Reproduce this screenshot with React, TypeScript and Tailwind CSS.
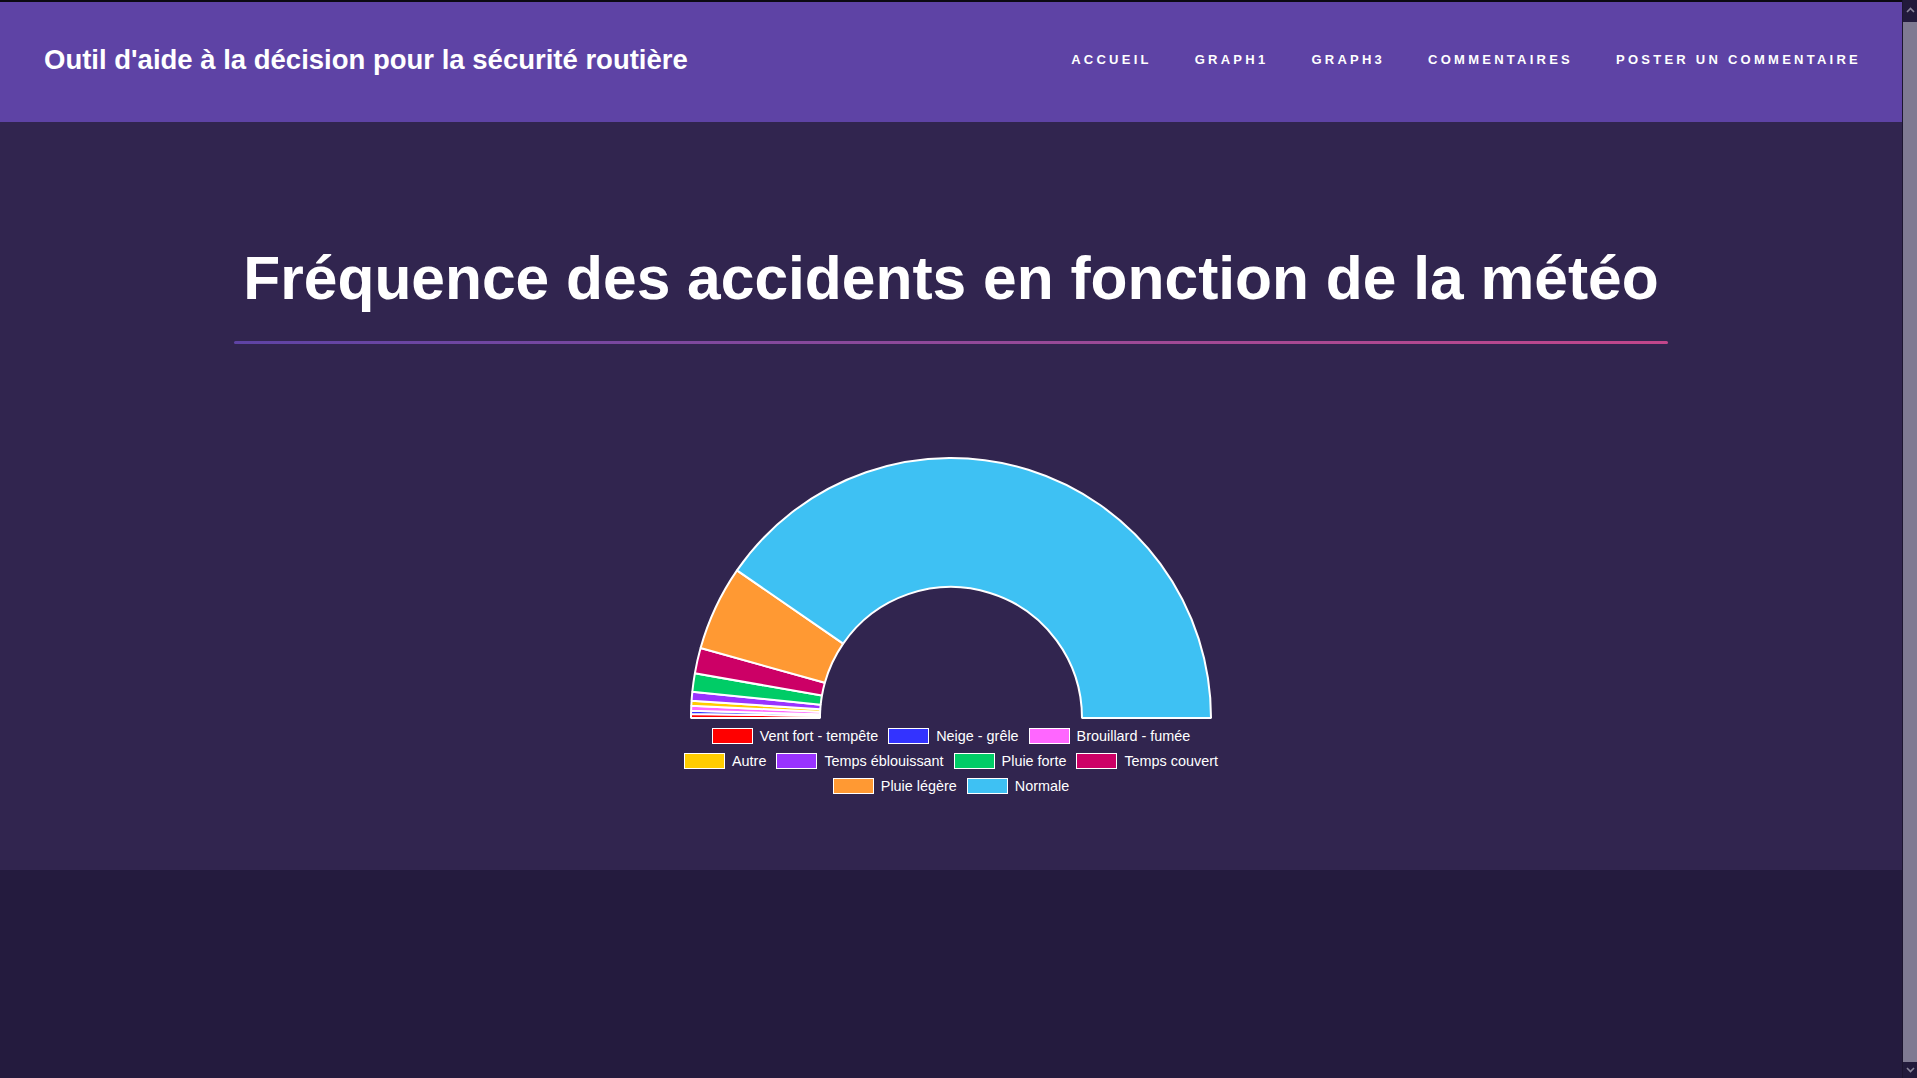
import React from 'react'

interface Slice {
  label: string
  color: string
  deg: number
}

const slices: Slice[] = [
  { label: 'Vent fort - tempête', color: '#ff0000', deg: 0.9 },
  { label: 'Neige - grêle', color: '#3333ff', deg: 0.7 },
  { label: 'Brouillard - fumée', color: '#ff66ff', deg: 1.1 },
  { label: 'Autre', color: '#ffcc00', deg: 1.1 },
  { label: 'Temps éblouissant', color: '#9933ff', deg: 2.0 },
  { label: 'Pluie forte', color: '#00cc66', deg: 4.1 },
  { label: 'Temps couvert', color: '#cc0066', deg: 5.7 },
  { label: 'Pluie légère', color: '#ff9933', deg: 19.0 },
  { label: 'Normale', color: '#3ec1f3', deg: 145.4 },
]

const legendRows = [slices.slice(0, 3), slices.slice(3, 7), slices.slice(7)]

const navLinks = ['Accueil', 'Graph1', 'Graph3', 'Commentaires', 'Poster un commentaire']

const CX = 270
const CY = 266
const R_OUT = 260
const R_IN = 131

// angle measured from the left end, going clockwise over the top
const point = (r: number, deg: number) => {
  const a = (deg * Math.PI) / 180
  return [CX - r * Math.cos(a), CY - r * Math.sin(a)]
}

const arcPath = (from: number, to: number) => {
  const large = to - from > 180 ? 1 : 0
  const [x1, y1] = point(R_OUT, from)
  const [x2, y2] = point(R_OUT, to)
  const [x3, y3] = point(R_IN, to)
  const [x4, y4] = point(R_IN, from)
  return `M ${x1} ${y1} A ${R_OUT} ${R_OUT} 0 ${large} 1 ${x2} ${y2} L ${x3} ${y3} A ${R_IN} ${R_IN} 0 ${large} 0 ${x4} ${y4} Z`
}

const HalfDoughnut: React.FC = () => {
  let start = 0
  return (
    <svg width={540} height={270} viewBox="0 0 540 270" className="block">
      {slices.map((s) => {
        const d = arcPath(start, start + s.deg)
        start += s.deg
        return (
          <path key={s.label} d={d} fill={s.color} stroke="#ffffff" strokeWidth={2} strokeLinejoin="bevel" />
        )
      })}
    </svg>
  )
}

const Chevron: React.FC<{ up?: boolean }> = ({ up }) => (
  <svg width={9} height={6} viewBox="0 0 9 6" className="block">
    <polyline
      points={up ? '1,5 4.5,1.5 8,5' : '1,1 4.5,4.5 8,1'}
      fill="none"
      stroke="#8b869c"
      strokeWidth={1.6}
    />
  </svg>
)

const ScrollStrip: React.FC = () => (
  <div className="flex w-[15px] shrink-0 flex-col border-l border-[#1c1530] bg-[#231b3e]">
    <div className="flex h-[20px] items-center justify-center bg-[#221a3b]">
      <Chevron up />
    </div>
    <div className="mt-[2px] flex-1 bg-[#7f7a92]" />
    <div className="flex h-[16px] items-center justify-center bg-[#221a3b]">
      <Chevron />
    </div>
  </div>
)

const App: React.FC = () => {
  return (
    <div className="flex h-screen overflow-hidden bg-[#241b3e] font-['Liberation_Sans',Arial,sans-serif] text-white">
      <div className="min-w-0 flex-1">
        <header className="flex h-[122px] items-center justify-between border-t-2 border-[#0c0a12] bg-[#5e43a5] pl-[44px] pr-[41px]">
          <h2 className="pb-[4px] text-[27.5px] font-bold">Outil d'aide à la décision pour la sécurité routière</h2>
          <nav className="flex gap-[43px] pb-[5px]">
            {navLinks.map((link) => (
              <a key={link} href="#" className="text-[13px] font-bold uppercase tracking-[0.25em] text-white">
                {link}
              </a>
            ))}
          </nav>
        </header>

        <section className="flex h-[748px] flex-col items-center bg-[#31254f] pt-[126px]">
          <div className="flex flex-col">
            <h1 className="px-[9px] text-[60.5px] font-bold leading-none">
              Fréquence des accidents en fonction de la météo
            </h1>
            <div className="mt-[32px] h-[3px] rounded-full bg-gradient-to-r from-[#5e43a5] to-[#c2468b]" />
          </div>

          <div className="mt-[108px]">
            <HalfDoughnut />
          </div>

          <div className="mt-[2px] flex flex-col text-[14.4px]">
            {legendRows.map((row, i) => (
              <div key={i} className="flex h-[25px] items-center justify-center gap-[10px]">
                {row.map((s) => (
                  <div key={s.label} className="flex items-center gap-[7px]">
                    <span
                      className="block h-[16px] w-[41px] border border-white"
                      style={{ backgroundColor: s.color }}
                    />
                    <span className="leading-none">{s.label}</span>
                  </div>
                ))}
              </div>
            ))}
          </div>
        </section>

        <footer className="h-[222px] bg-[#241b3e]" />
      </div>
      <ScrollStrip />
    </div>
  )
}

export default App
